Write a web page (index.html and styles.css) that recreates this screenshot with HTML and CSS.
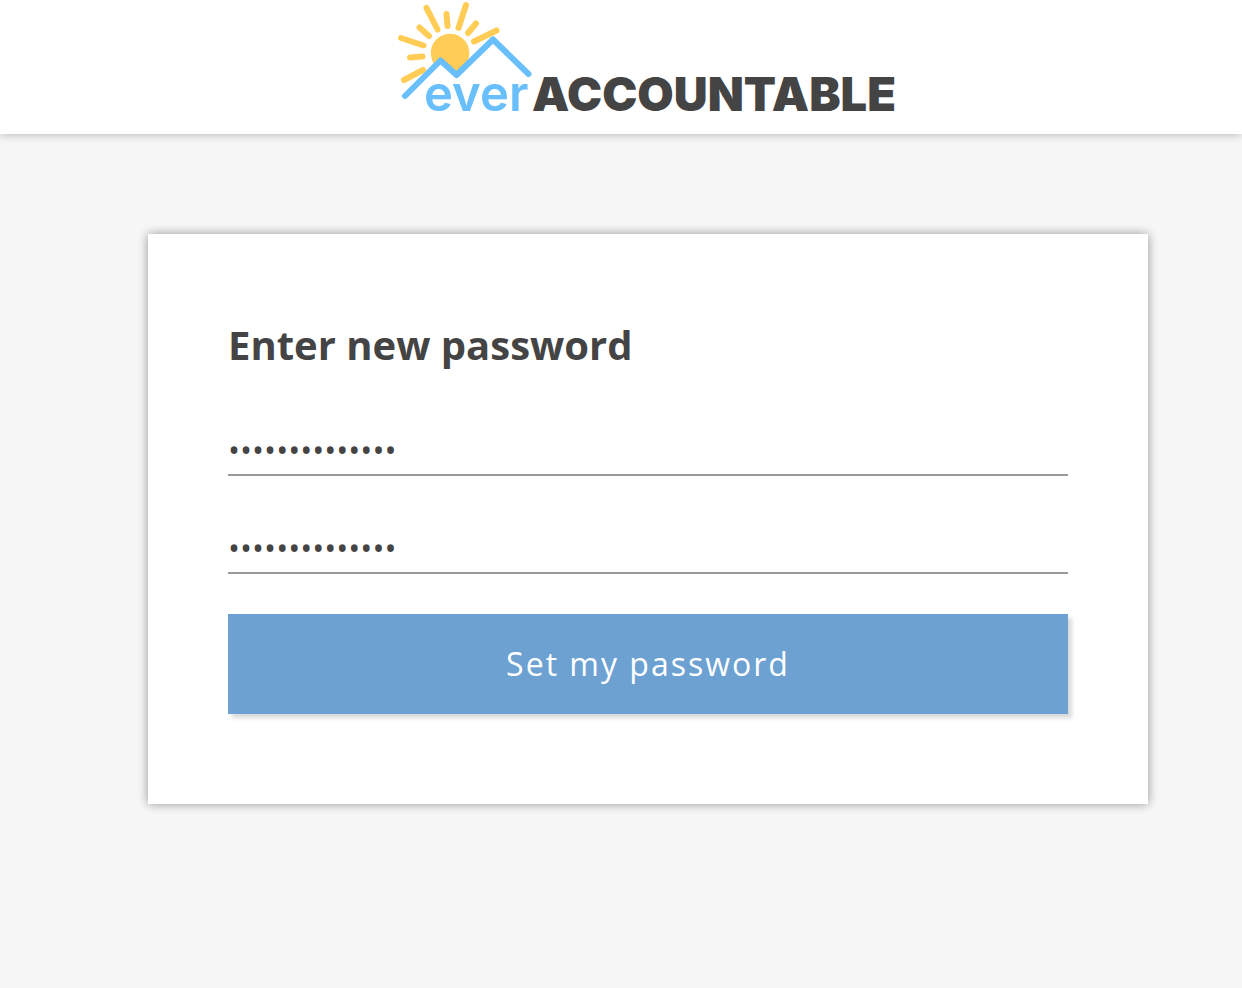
FILE: index.html
```html
<!DOCTYPE html>
<html lang="en">
<head>
<meta charset="utf-8">
<meta name="viewport" content="width=device-width, initial-scale=1">
<title>Ever Accountable</title>
<link rel="stylesheet" href="styles.css">
</head>
<body>
<header class="header">
    <svg class="logo" viewBox="0 0 504 134" role="img" aria-label="Ever Accountable">
        <!-- sun -->
        <path class="sun" d="M34.5 61 A19.3 19.3 0 1 1 70 60 L58.500 74 L43 60 L36 66 Z"/>
        <g class="rays">
            <path d="M3 38 L25.500 45.500"/>
            <path d="M21.500 27.500 L31 36"/>
            <path d="M28.500 8 L39.500 29.500"/>
            <path d="M48.500 14 L49.500 26"/>
            <path d="M68 5 L60.500 28"/>
            <path d="M78 23.500 L70 33"/>
            <path d="M98.500 30.500 L76 41.500"/>
            <path d="M12 57.500 L24.500 56.500"/>
            <path d="M6 80 L25 70"/>
        </g>
        <!-- mountains -->
        <path class="peaks" d="M7 96 L42.500 60.500 L58.500 75 L95 39.500 L130.500 74"/>
        <text class="ever" x="26" y="111">ever</text>
        <text class="accountable" x="134" y="111">ACCOUNTABLE</text>
    </svg>
</header>
<main class="content">
    <form class="card">
        <h1>Enter new password</h1>
        <input type="password" name="password" value="abcdefghijklmn" aria-label="New password" autocomplete="new-password">
        <input type="password" name="confirm" value="abcdefghijklmn" aria-label="Confirm new password" autocomplete="new-password">
        <button type="submit">Set my password</button>
    </form>
</main>
</body>
</html>
```
FILE: styles.css
```css
* {
    box-sizing: border-box;
}
body {
    margin: 0;
    background: #f7f7f7;
    color: #444;
    font-family: "Open Sans", sans-serif;
}
.header {
    display: flex;
    justify-content: center;
    padding-left: 58px;
    background: #fff;
    box-shadow: 0 0 10px rgba(0,0,0,0.3);
}
.logo {
    display: block;
    width: 504px;
    height: 134px;
}
.sun {
    fill: #fc5;
}
.rays, .peaks {
    fill: none;
    stroke-linecap: round;
    stroke-linejoin: round;
}
.rays {
    stroke: #fc5;
    stroke-width: 6px;
}
.peaks {
    stroke: #68bffc;
    stroke-width: 6px;
}
.logo text {
    font-family: Inter, sans-serif;
}
.logo .ever {
    fill: #68bffc;
    font-size: 49px;
    font-weight: 600;
}
.logo .accountable {
    fill: #444;
    font-size: 47px;
    font-weight: 900;
}

.content {
    display: flex;
    justify-content: center;
    padding: 100px 0 100px 54px;
}
.card {
    display: flex;
    flex-direction: column;
    width: 100%;
    max-width: 1000px;
    padding: 80px 80px 90px;
    background: #fff;
    box-shadow: 0 0 10px rgba(0,0,0,0.4);
}
.card h1 {
    margin: 0 0 42px;
    font-size: 40px;
    line-height: 62px;
    font-weight: bold;
}
.card input {
    width: 100%;
    height: 58px;
    margin: 0 0 40px;
    padding: 6px 0 0;
    border: 0;
    border-bottom: 2px solid #999;
    border-radius: 0;
    outline: 0;
    background: transparent;
    color: inherit;
    font-family: inherit;
    font-size: 32px;
}
.card button {
    width: 100%;
    height: 100px;
    padding: 0 0 2px;
    border: 0;
    background: #6da1d2;
    box-shadow: 4px 4px 4px rgba(0,0,0,0.15);
    color: #fff;
    font-family: inherit;
    font-size: 32px;
    font-weight: 500;
    letter-spacing: 2px;
    cursor: pointer;
}
```
